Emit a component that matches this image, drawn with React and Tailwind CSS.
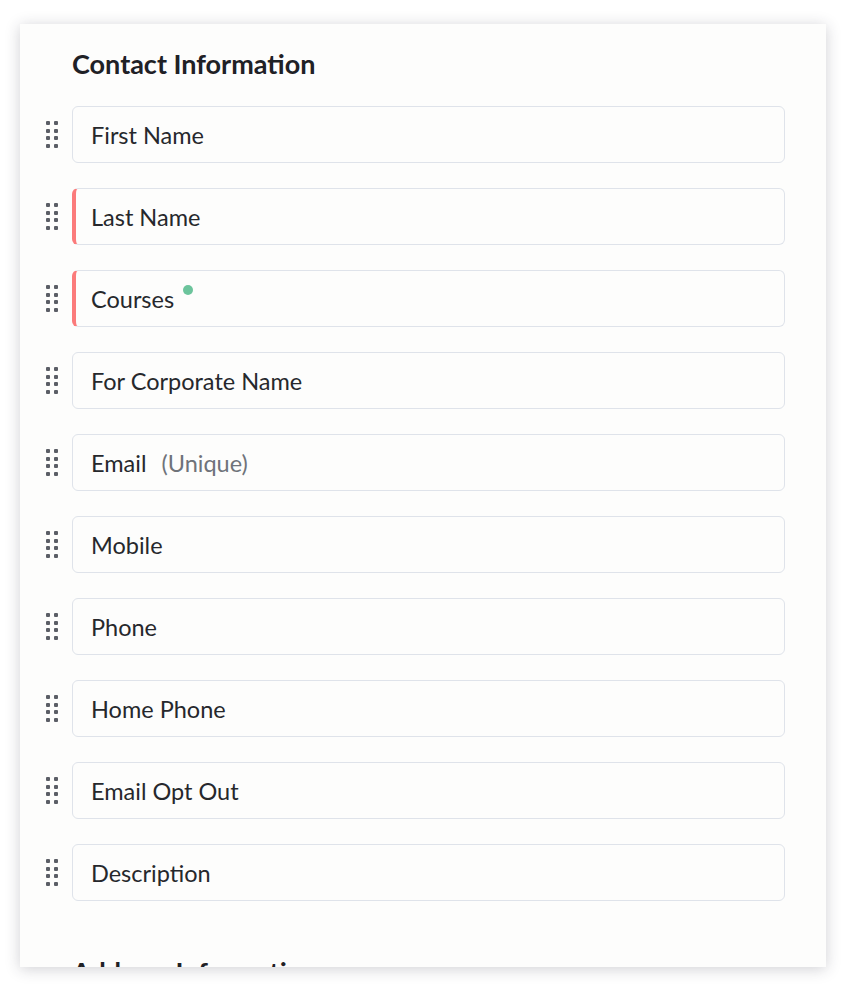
import React from 'react';

const fields = [
  { label: 'First Name' },
  { label: 'Last Name', required: true },
  { label: 'Courses', required: true, dot: true },
  { label: 'For Corporate Name' },
  { label: 'Email', note: '(Unique)' },
  { label: 'Mobile' },
  { label: 'Phone' },
  { label: 'Home Phone' },
  { label: 'Email Opt Out' },
  { label: 'Description' },
];

function DragHandle() {
  return (
    <div className="grid grid-cols-2 gap-x-[4px] gap-y-[3.5px] w-[12px]">
      {Array.from({ length: 8 }).map((_, i) => (
        <span key={i} className="block w-[4px] h-[4px] bg-[#5b5e66] rounded-[1px]" />
      ))}
    </div>
  );
}

function FieldRow({ field }) {
  return (
    <div className="flex items-center">
      <div className="w-[52px] flex justify-end pr-[14px]">
        <DragHandle />
      </div>
      <div
        className={
          field.required
            ? 'flex-1 h-[57px] flex items-center rounded-[6px] border border-[#dfe3ea] border-l-4 border-l-[#fb7b7b] pl-[15px] pt-[3px] bg-[#fdfdfc]'
            : 'flex-1 h-[57px] flex items-center rounded-[6px] border border-[#dfe3ea] pl-[18px] pt-[3px] bg-[#fdfdfc]'
        }
      >
        <span className="text-[23.5px] text-[#26282c] relative">
          {field.label}
          {field.dot && (
            <span className="absolute -right-[19px] top-[3px] w-[10px] h-[10px] rounded-full bg-[#6cc49c]" />
          )}
        </span>
        {field.note && <span className="text-[23.5px] text-[#6f737a] ml-[15px]">{field.note}</span>}
      </div>
    </div>
  );
}

export default function App() {
  return (
    <div className="min-h-screen bg-white pt-[24px] pl-[20px]" style={{ fontFamily: 'Lato, "Open Sans", sans-serif' }}>
      <div className="w-[806px] h-[943px] bg-[#fdfdfc] overflow-hidden shadow-[0_2px_14px_rgba(40,40,60,0.22)] pr-[41px] pt-[22px]">
        <h2 className="pl-[52px] text-[27px] font-bold text-[#1f2126] leading-[36px]">Contact Information</h2>
        <div className="mt-[24px] flex flex-col gap-[25px]">
          {fields.map((f) => (
            <FieldRow key={f.label} field={f} />
          ))}
        </div>
        <h2 className="pl-[52px] mt-[53px] text-[27px] font-bold text-[#1f2126] leading-[36px]">Address Information</h2>
      </div>
    </div>
  );
}
